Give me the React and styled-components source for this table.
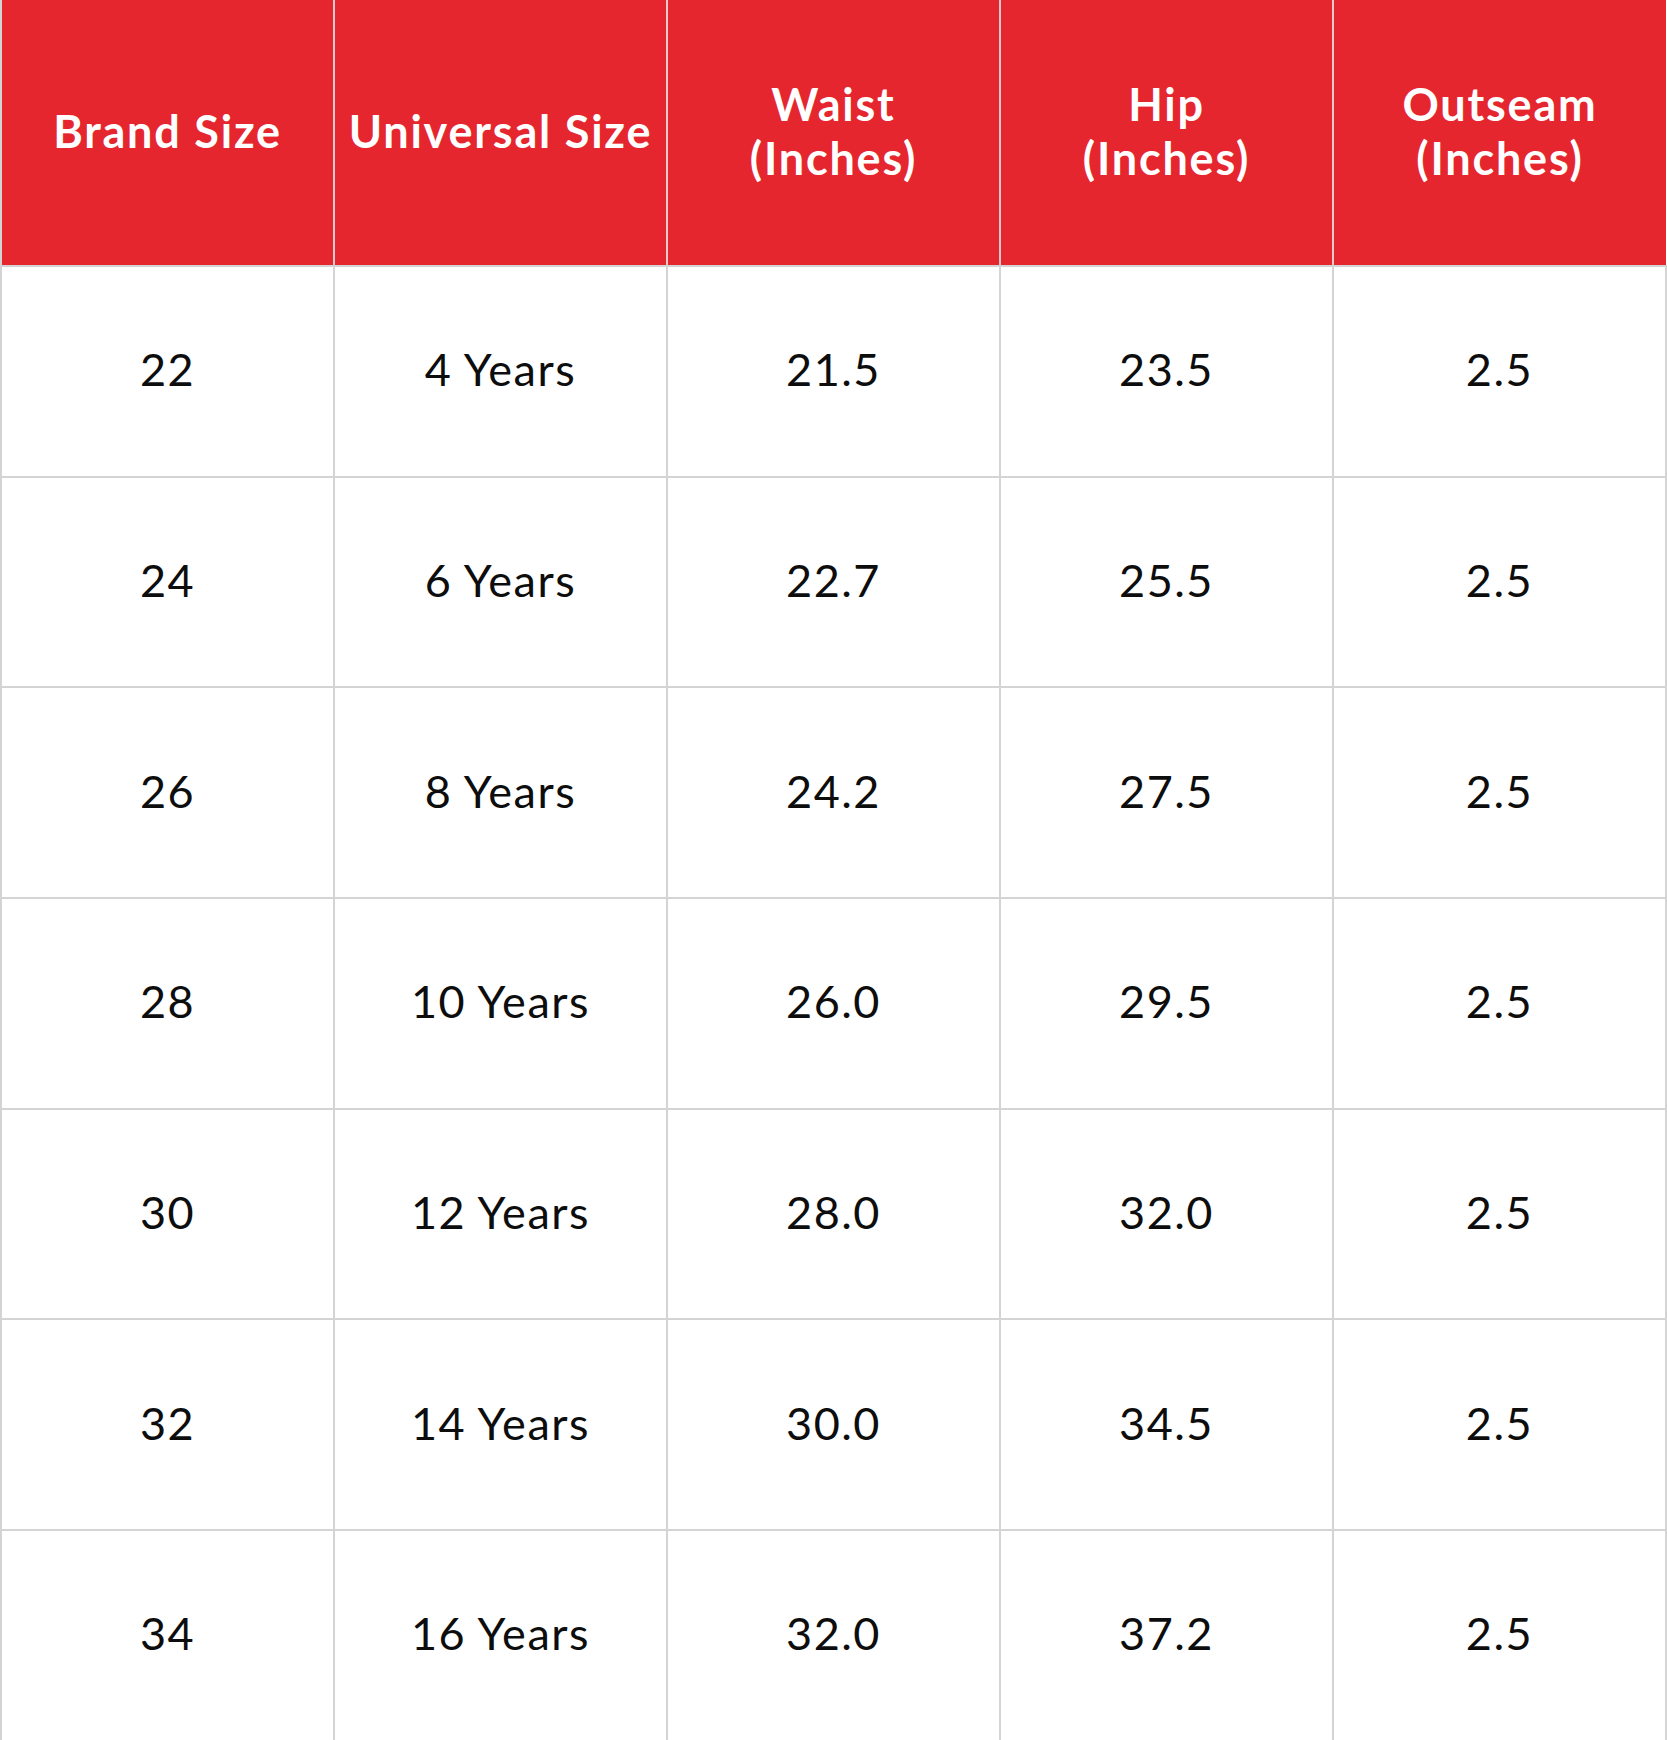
import React from 'react'
import styled, {createGlobalStyle} from 'styled-components'

const GlobalStyle = createGlobalStyle`
  html, body {
    margin: 0;
    padding: 0;
    background: #ffffff;
  }
`

const columns = [
    ['Brand Size'],
    ['Universal Size'],
    ['Waist', '(Inches)'],
    ['Hip', '(Inches)'],
    ['Outseam', '(Inches)'],
]

const rows = [
    ['22', '4 Years', '21.5', '23.5', '2.5'],
    ['24', '6 Years', '22.7', '25.5', '2.5'],
    ['26', '8 Years', '24.2', '27.5', '2.5'],
    ['28', '10 Years', '26.0', '29.5', '2.5'],
    ['30', '12 Years', '28.0', '32.0', '2.5'],
    ['32', '14 Years', '30.0', '34.5', '2.5'],
    ['34', '16 Years', '32.0', '37.2', '2.5'],
]

export default function App() {
    return (
        <>
            <GlobalStyle />
            <SizeTable>
                <thead>
                    <tr>
                        {columns.map((lines, i) => (
                            <HeadCell key={i}>
                                {lines.map((line) => (
                                    <span key={line}>{line}</span>
                                ))}
                            </HeadCell>
                        ))}
                    </tr>
                </thead>
                <tbody>
                    {rows.map((row) => (
                        <Row key={row[0]}>
                            {row.map((value, i) => (
                                <Cell key={i}>{value}</Cell>
                            ))}
                        </Row>
                    ))}
                </tbody>
            </SizeTable>
        </>
    )
}

const SizeTable = styled.table`
width: 1667px;
table-layout: fixed;
border-collapse: collapse;
font-family: Lato, "Liberation Sans", sans-serif;
`

const HeadCell = styled.th`
height: 261px;
padding: 0 0 4px;
background: #e6262e;
color: #ffffff;
font-size: 45px;
font-weight: 700;
line-height: 54px;
letter-spacing: 1.8px;
text-align: center;
vertical-align: middle;
border-left: 2px solid #e3c9cb;
border-bottom: 2px solid #d4d4d4;
&:first-child{
    border-left: 2px solid #d4d4d4;
}
span{
    display: block;
}
`

const Row = styled.tr`
height: 210.7px;
`

const Cell = styled.td`
padding: 0 0 4px;
color: #0d0d0d;
font-size: 45px;
font-weight: 400;
letter-spacing: 1.5px;
text-align: center;
vertical-align: middle;
border: 2px solid #d4d4d4;
`
